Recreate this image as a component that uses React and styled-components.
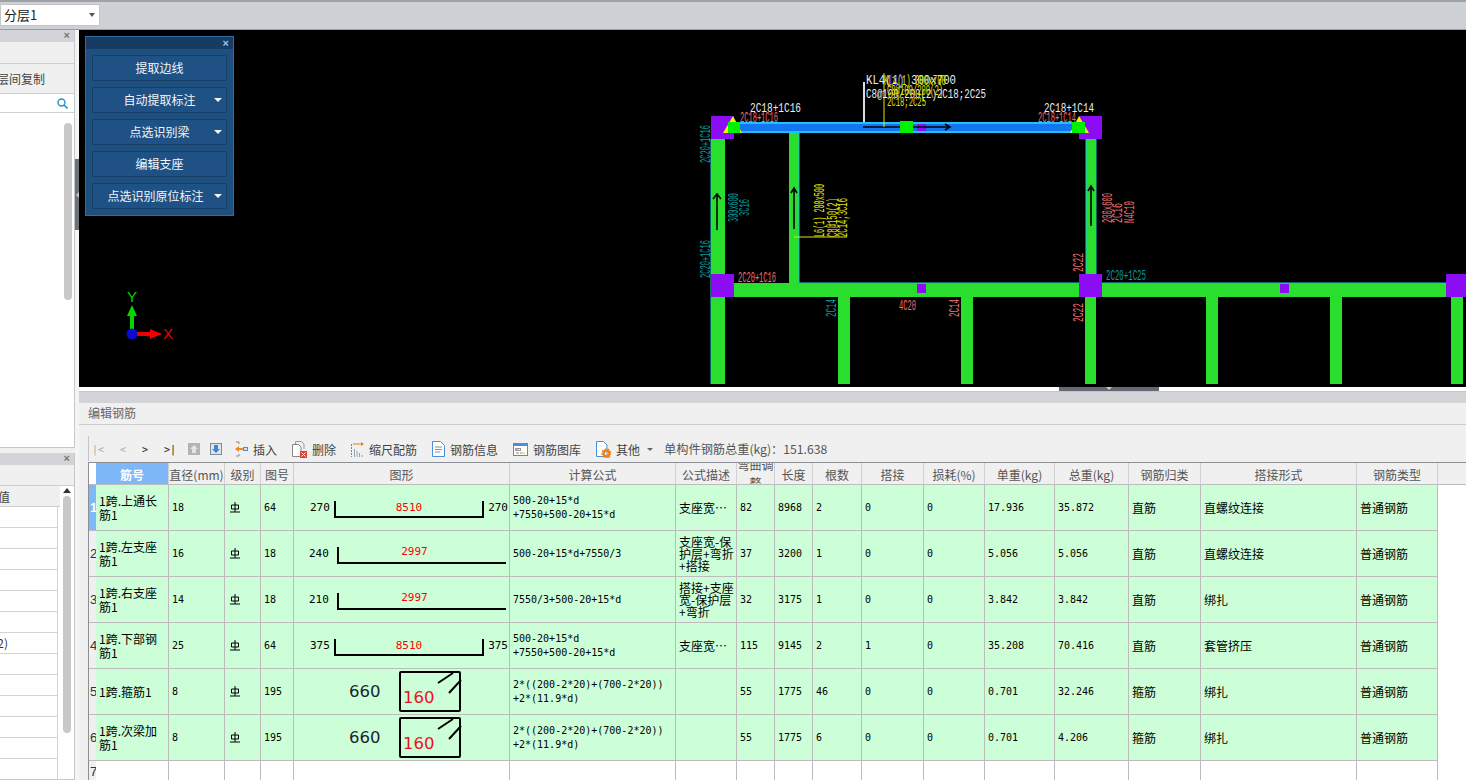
import React from 'react';
import styled, { createGlobalStyle } from 'styled-components';

const CJK = `"Noto Sans CJK SC", "Noto Sans", sans-serif`;
const MONO = `"DejaVu Sans Mono", "Noto Sans CJK SC", monospace`;

const Global = createGlobalStyle`
    html, body { margin: 0; padding: 0; background: #fff; overflow: hidden; }
    * { box-sizing: border-box; }
`;

const Page = styled.div`
    width: 1466px;
    height: 780px;
    display: flex;
    flex-direction: column;
    overflow: hidden;
    font-family: ${CJK};
    font-size: 12px;
`;

const TopBar = styled.div`
    height: 30px;
    flex: none;
    background: #cdd0d4;
    border-top: 2px solid #9fa2a6;
    border-bottom: 1px solid #9a9da1;
    padding-top: 2px;
`;

const LayerSelect = styled.div`
    width: 100px;
    height: 22px;
    background: #fff;
    border: 1px solid #c4c4c4;
    display: flex;
    align-items: center;
    justify-content: space-between;
    padding: 0 4px 2px 3px;
    font-size: 13px;
    color: #222;
    &::after {
        content: '';
        margin-top: 2px;
        border-left: 3px solid transparent;
        border-right: 3px solid transparent;
        border-top: 4px solid #555;
    }
`;

const Main = styled.div`
    flex: 1;
    display: flex;
    min-height: 0;
`;

const Sidebar = styled.div`
    width: 75px;
    flex: none;
    display: flex;
    flex-direction: column;
    gap: 5px;
    background: #f0f0f0;
`;

const Panel = styled.div`
    flex: ${p => p.$flex || 1};
    height: ${p => p.$height || 'auto'};
    background: #fff;
    border-right: 1px solid #c8c8c8;
    border-bottom: 1px solid #c8c8c8;
    display: flex;
    flex-direction: column;
    overflow: hidden;
    position: relative;
`;

const PanelHead = styled.div`
    height: 12px;
    flex: none;
    background: #d2d4d8;
    color: #777;
    font: bold 11px/11px "Liberation Sans", sans-serif;
    text-align: right;
    padding-right: 4px;
`;

const PanelRow = styled.div`
    height: ${p => p.$h}px;
    width: ${p => (p.$w ? `${p.$w}px` : 'auto')};
    flex: none;
    background: ${p => p.$bg || '#f0f0f0'};
    border-bottom: 1px solid #cfcfcf;
    display: flex;
    align-items: center;
    justify-content: flex-end;
    white-space: nowrap;
    color: #444;
    padding-right: ${p => p.$pr || 0}px;
`;

const Clip = styled.span`
    flex: none;
    margin-right: ${p => p.$mr || 0}px;
`;

const ListBody = styled.div`
    flex: 1;
    position: relative;
`;

const Scroll = styled.div`
    position: absolute;
    left: ${p => p.$left}px;
    top: ${p => p.$top}px;
    width: 8px;
    height: ${p => p.$h}px;
    background: #c8c8c8;
    border-radius: 4px;
`;

const PropLine = styled.div`
    width: 58px;
    height: 21px;
    border-bottom: 1px solid #d4d4d4;
    border-right: 1px solid #d4d4d4;
    display: flex;
    justify-content: flex-end;
    line-height: 20px;
    color: #333;
    white-space: nowrap;
    font-size: 12px;
    padding-right: 49px;
`;

const UpArrow = styled.div`
    position: absolute;
    left: 63px;
    top: 35px;
    border-left: 4px solid transparent;
    border-right: 4px solid transparent;
    border-bottom: 5px solid #333;
`;

const Splitter = styled.div`
    width: 4px;
    flex: none;
    background: #f4f4f4;
    padding-top: 129px;
`;

const Grip = styled.div`
    height: 71px;
    background: #6d7278;
    display: flex;
    align-items: center;
    color: #c8c8c8;
    &::before {
        content: '';
        margin-left: 1px;
        border-top: 3px solid transparent;
        border-bottom: 3px solid transparent;
        border-right: 3px solid #c8c8c8;
    }
`;

const Workspace = styled.div`
    flex: 1;
    min-width: 0;
    display: flex;
    flex-direction: column;
`;

const Canvas = styled.div`
    height: 357px;
    flex: none;
    background: #000;
    position: relative;
    overflow: hidden;
`;

const CadSvg = styled.svg`
    display: block;
    width: 100%;
    height: 100%;
`;

const CadLabel = styled.text`
    font-family: "Liberation Mono", monospace;
    font-size: ${p => p.$size || 15}px;
`;

const AxisLetter = styled.text`
    font-family: "Liberation Sans", sans-serif;
    font-size: 15px;
`;

const FloatPanel = styled.div`
    position: absolute;
    left: 6px;
    top: 6px;
    width: 149px;
    height: 180px;
    background: #1d4f7f;
    border: 1px solid #2f6ca6;
`;

const FloatHead = styled.div`
    height: 12px;
    background: #173b61;
    color: #9cc6e6;
    font: bold 11px/12px "Liberation Sans", sans-serif;
    text-align: right;
    padding-right: 4px;
`;

const FloatBody = styled.div`
    display: flex;
    flex-direction: column;
    gap: 6px;
    padding: 6px 6px 0;
`;

const FloatButton = styled.div`
    height: 26px;
    background: #1f5184;
    border: 1px solid #173e66;
    border-radius: 2px;
    color: #f2f6fa;
    display: flex;
    align-items: center;
    justify-content: center;
    font-size: 12px;
    position: relative;
    padding-right: ${p => p.$shift || 0}px;
    padding-bottom: 2px;
`;

const FloatCaret = styled.span`
    position: absolute;
    right: 4px;
    top: 10px;
    border-left: 4px solid transparent;
    border-right: 4px solid transparent;
    border-top: 4px solid #f2f6fa;
`;

const SashRow = styled.div`
    height: 4px;
    flex: none;
    background: #fff;
    display: flex;
    padding-left: 980px;
`;

const SashHandle = styled.div`
    width: 100px;
    height: 4px;
    background: #636a72;
    display: flex;
    justify-content: center;
    &::after {
        content: '';
        border-left: 3px solid transparent;
        border-right: 3px solid transparent;
        border-top: 3px solid #c8ccd0;
    }
`;

const EditorPanel = styled.div`
    flex: 1;
    min-height: 0;
    display: flex;
    flex-direction: column;
    background: #f0f0f0;
    border-top: 1px solid #c4c6ca;
`;

const EditorStrip = styled.div`
    height: 11px;
    flex: none;
    background: #d3d4d8;
`;

const EditorTitle = styled.div`
    height: 22px;
    flex: none;
    border-bottom: 1px solid #cccccc;
    padding-left: 9px;
    line-height: 19px;
    color: #666;
    font-size: 12px;
`;

const Toolbar = styled.div`
    height: 37px;
    flex: none;
    display: flex;
    align-items: center;
    margin-left: 9px;
    padding-top: 11px;
    position: relative;
    &::before {
        content: '';
        position: absolute;
        left: 0;
        top: 11px;
        bottom: 1px;
        width: 1px;
        background: #c4c4c4;
    }
`;

const NavItem = styled.span`
    width: ${p => p.$w}px;
    flex: none;
    text-align: center;
    font-family: ${MONO};
    font-size: 10px;
    color: ${p => (p.$off ? '#aaa' : '#222')};
`;

const ToolIcon = styled.svg`
    display: block;
    flex: none;
    margin-right: ${p => p.$mr || 0}px;
`;

const ToolGroup = styled.div`
    display: flex;
    align-items: center;
    gap: 15px;
    margin-left: 13px;
`;

const ToolButton = styled.div`
    display: flex;
    align-items: center;
    gap: 5px;
    color: #444;
    font-size: 12px;
    white-space: nowrap;
`;

const ToolCaret = styled.span`
    margin-left: 2px;
    border-left: 3px solid transparent;
    border-right: 3px solid transparent;
    border-top: 3px solid #666;
`;

const Total = styled.span`
    color: #555;
    font-size: 12.2px;
    white-space: nowrap;
    margin-left: -4px;
`;

const Table = styled.div`
    flex: 1;
    min-height: 0;
    margin-left: 9px;
    border-left: 1px solid #8b8e92;
    border-top: 1px solid #8b8e92;
    background: #fff;
    overflow: hidden;
`;

const Row = styled.div`
    display: grid;
    grid-template-columns: 7px 73px 56px 36px 33px 216px 166px 61px 38px 38px 49px 62px 61px 70px 74px 72px 156px 81px 1fr;
    height: ${p => p.$h}px;
    background: ${p => p.$bg || 'transparent'};
`;

const HeadCell = styled.div`
    background: ${p => (p.$active ? '#7eb8f8' : p.$corner ? '#fff' : '#f0f0f0')};
    color: ${p => (p.$active ? '#fff' : '#555')};
    font-weight: ${p => (p.$active ? 700 : 400)};
    border-right: ${p => (p.$bare ? 'none' : '1px solid #d0d0d0')};
    border-bottom: 1px solid #bcbcbc;
    display: flex;
    align-items: center;
    justify-content: center;
    text-align: center;
    white-space: ${p => (p.$wrap ? 'pre-line' : 'nowrap')};
    line-height: ${p => (p.$wrap ? '18px' : 'normal')};
    padding-top: 1px;
    overflow: hidden;
    font-size: 12px;
`;

const RowHead = styled.div`
    background: ${p => (p.$active ? '#7eb8f8' : '#f0f0f0')};
    color: ${p => (p.$active ? '#fff' : '#333')};
    font-weight: ${p => (p.$active ? 700 : 400)};
    border-bottom: 1px solid #bcbcbc;
    display: flex;
    align-items: center;
    font-family: "Liberation Sans", sans-serif;
    font-size: 13px;
    padding-left: 1px;
    overflow: hidden;
`;

const Cell = styled.div`
    background: ${p => (p.$empty ? '#fff' : '#ccffd7')};
    border-right: 1px solid #bcbcbc;
    border-bottom: 1px solid #bcbcbc;
    color: #000;
    display: flex;
    align-items: center;
    padding: ${p => p.$pad || '0 3px'};
    overflow: hidden;
    font-family: ${p => (p.$mono ? MONO : CJK)};
    font-size: ${p => (p.$mono ? '10px' : '12px')};
    line-height: ${p => p.$lh || 14}px;
    white-space: ${p => (p.$pre ? 'pre' : 'normal')};
`;

const Blank = styled.div`
    background: #fff;
`;

const ShapeWrap = styled.div`
    width: 100%;
    height: 100%;
    display: flex;
    align-items: center;
    padding-left: ${p => p.$pl}px;
    font-family: ${MONO};
    font-size: 11px;
    color: #000;
`;

const EndLabel = styled.span`
    flex: none;
    width: ${p => p.$w}px;
    text-align: ${p => p.$align};
`;

const Bar = styled.div`
    flex: none;
    width: ${p => p.$w}px;
    height: 17px;
    margin-top: 4px;
    margin-left: ${p => p.$ml}px;
    padding-right: ${p => (p.$closed ? 0 : 16)}px;
    border-bottom: 2px solid #000;
    border-left: 2px solid #000;
    border-right: ${p => (p.$closed ? '2px solid #000' : 'none')};
    color: #f00;
    text-align: center;
    line-height: ${p => (p.$closed ? 13 : 9)}px;
    font-size: 11px;
`;

const StirrupLen = styled.span`
    flex: none;
    width: 50px;
    font-family: "DejaVu Sans", sans-serif;
    font-size: 16.5px;
    color: #1c2430;
`;

const StirrupBox = styled.div`
    flex: none;
    width: 62px;
    height: 41px;
    border: 2px solid #000;
    border-radius: 2px;
    position: relative;
    color: #f01020;
    font-family: "DejaVu Sans", sans-serif;
    font-size: 16.5px;
    line-height: 19px;
    padding: 15px 0 0 2px;
`;

const StirrupHooks = styled.svg`
    position: absolute;
    left: 34px;
    top: -1px;
`;

const Grade = styled.svg`
    display: block;
    margin-left: 2px;
`;

// text, x, baseline y, drawn length, colour, font size
const labels = [
    ['2C18+1C16', 750, 112, 51, '#eee', 12],
    ['2C18+1C16', 740, 122, 38, '#f07070'],
    ['2C18+1C14', 1044, 112, 50, '#eee', 12],
    ['2C18+1C14', 1038, 122, 38, '#f07070'],
    ['KL4(1) 300x700', 866, 84, 90, '#eee', 13],
    ['C8@100/200(2)2C18;2C25', 866, 98, 120, '#eee', 12],
    ['KL4(1) 300x700', 884, 85, 62, '#e4e400', 14],
    ['(1)', 889, 85, 15, '#2030e0', 14],
    ['C8@100/200(2)', 887, 95, 56, '#e4e400', 14],
    ['2C18;2C25', 887, 106, 39, '#e4e400', 13],
    ['2C20+1C16', 738, 282, 38, '#f07070'],
    ['2C20+1C25', 1106, 280, 40, '#0a9a9a'],
    ['4C20', 899, 310, 17, '#f07070'],
];

// same fields, x is the baseline and the text runs upward from y
const vertLabels = [
    ['2C20+1C16', 710, 163, 38, '#0a9a9a'],
    ['2C20+1C16', 710, 278, 38, '#0a9a9a'],
    ['300x600', 738, 222, 29, '#0a9a9a'],
    ['3C16', 749, 216, 17, '#0a9a9a'],
    ['L6(1) 200x500', 824, 237, 53, '#e4e400', 14],
    ['C8@150(2)', 837, 237, 39, '#e4e400', 14],
    ['2C14;3C16', 847, 237, 39, '#e4e400', 14],
    ['200x600', 1112, 223, 30, '#f07070'],
    ['2C16', 1122, 223, 20, '#f07070', 14],
    ['N4C10', 1134, 223, 22, '#f07070', 14],
    ['2C22', 1083, 272, 19, '#f07070'],
    ['2C14', 836, 317, 18, '#0a9a9a', 14],
    ['2C14', 959, 317, 18, '#f07070', 14],
    ['2C22', 1083, 322, 19, '#f07070'],
];

const greenBlocks = [
    [711, 139, 14, 135], [789, 133, 10, 150], [1086, 139, 10, 135],
    [734, 283, 712, 14],
    [711, 297, 14, 87], [838, 297, 12, 87], [961, 297, 12, 87], [1085, 297, 11, 87],
    [1206, 297, 12, 87], [1330, 297, 12, 87], [1451, 297, 12, 87],
];

const purpleBlocks = [
    [711, 116, 23, 23], [1079, 116, 23, 23], [711, 274, 23, 23], [1079, 274, 23, 23],
    [1446, 274, 20, 23], [917, 284, 9, 9], [1280, 284, 9, 9], [917, 124, 9, 7],
];

const CadDrawing = () => (
    <CadSvg viewBox="79 30 1387 357">
        {greenBlocks.map(([x, y, w, h]) => <rect key={`${x}-${y}`} x={x} y={y} width={w} height={h} fill="#2ade2e" />)}
        <path d="M711 139V384M799 133V283H1079M1086 139V274M1096 139V274M1102 283H1446" stroke="#18c8d0" strokeWidth="1" fill="none" />
        <rect x="734" y="122" width="345" height="11" fill="#20c0ff" />
        <rect x="734" y="124" width="345" height="7" fill="#1475f0" />
        {purpleBlocks.map(([x, y, w, h]) => <rect key={`${x}-${y}`} x={x} y={y} width={w} height={h} fill="#8c0cf4" />)}

        <path d="M733 116L742 133H723Z" fill="#f4f400" />
        <rect x="728" y="122" width="12" height="11" fill="#00f000" />
        <path d="M1079 116L1089 133H1070Z" fill="#f4f400" />
        <rect x="1072" y="122" width="13" height="11" fill="#00f000" />

        <path d="M863 127H949M945 124L950 127L945 130" stroke="#000" strokeWidth="1.6" fill="none" />
        <rect x="900" y="121" width="13" height="12" fill="#00f000" />
        <path d="M864 82V122" stroke="#ddd" strokeWidth="2" />
        <path d="M884 73V127" stroke="#e4e400" strokeWidth="1" />
        <path d="M794 237H847" stroke="#e4e400" strokeWidth="1" />

        <path d="M717 230V194M713 199L717 194L721 199" stroke="#000" strokeWidth="1.6" fill="none" />
        <path d="M794 229V188M791 193L794 188L797 193" stroke="#000" strokeWidth="1.6" fill="none" />
        <path d="M1091 226V186M1088 191L1091 186L1094 191" stroke="#000" strokeWidth="1.6" fill="none" />

        {labels.map(([t, x, y, w, c, s]) => (
            <CadLabel key={`${t}-${x}-${y}`} x={x} y={y} fill={c} $size={s} textLength={w} lengthAdjust="spacingAndGlyphs">{t}</CadLabel>
        ))}
        {vertLabels.map(([t, x, y, w, c, s]) => (
            <CadLabel key={`${t}-${x}-${y}`} x={x} y={y} fill={c} $size={s} textLength={w} lengthAdjust="spacingAndGlyphs" transform={`rotate(-90 ${x} ${y})`}>{t}</CadLabel>
        ))}

        <rect x="130" y="315" width="4" height="16" fill="#00d800" />
        <path d="M132 305L137 316H127Z" fill="#00d800" />
        <rect x="136" y="332" width="15" height="4" fill="#f00000" />
        <path d="M162 334L150 329V339Z" fill="#f00000" />
        <circle cx="132" cy="334" r="5.5" fill="#0a0ad0" />
        <AxisLetter x="127" y="302" fill="#00d800">Y</AxisLetter>
        <AxisLetter x="163" y="339" fill="#f00000">X</AxisLetter>
    </CadSvg>
);

const floatButtons = [
    { text: '提取边线' },
    { text: '自动提取标注', menu: true },
    { text: '点选识别梁', menu: true },
    { text: '编辑支座' },
    { text: '点选识别原位标注', menu: true, shift: 8 },
];

const UpIcon = () => (
    <ToolIcon width="12" height="12" viewBox="0 0 12 12" $mr={10}>
        <rect width="12" height="12" fill="#b4b4b4" />
        <path d="M6 2L10 6H8V10H4V6H2Z" fill="#e4e4e4" />
    </ToolIcon>
);

const DownIcon = () => (
    <ToolIcon width="12" height="12" viewBox="0 0 12 12">
        <rect x="0.5" y="0.5" width="11" height="11" fill="#dfe6ee" stroke="#7d8a98" />
        <path d="M6 10L10 6H8V2H4V6H2Z" fill="#3c86d8" />
    </ToolIcon>
);

const InsertIcon = () => (
    <ToolIcon width="13" height="16" viewBox="0 0 13 16">
        <path d="M4 3V1H1M4 13V15H1" stroke="#888" fill="none" />
        <path d="M0 8L4 5V7H8V9H4V11Z" fill="#f08a1c" />
        <rect x="8.5" y="6.5" width="4" height="3" fill="#cfe2f6" stroke="#4a90d8" />
    </ToolIcon>
);

const DeleteIcon = () => (
    <ToolIcon width="15" height="17" viewBox="0 0 15 17">
        <path d="M3.5 3.5V0.5H9.5L12 3V8" stroke="#999" fill="none" />
        <path d="M0.5 3.5H6.5L9 6V15.5H0.5Z" stroke="#888" fill="#fff" />
        <rect x="8" y="10" width="7" height="7" fill="#d8433a" />
        <path d="M9.5 11.5L13.5 15.5M13.5 11.5L9.5 15.5" stroke="#fff" />
    </ToolIcon>
);

const ScaleIcon = () => (
    <ToolIcon width="13" height="15" viewBox="0 0 13 15">
        <path d="M0.5 2V15" stroke="#4a90d8" strokeDasharray="2 1" />
        <path d="M2 2H11" stroke="#ef7f1a" />
        <path d="M10 0L13 2L10 4Z" fill="#ef7f1a" />
        <path d="M3.5 7V15M6 9V15M8.5 11V15M11 13V15" stroke="#8aa4bc" />
    </ToolIcon>
);

const InfoIcon = () => (
    <ToolIcon width="13" height="16" viewBox="0 0 13 16">
        <path d="M0.5 0.5H8.5L12.5 4.5V15.5H0.5Z" fill="#fff" stroke="#4a8fd8" />
        <path d="M3 6H10M3 8.5H10M3 11H8" stroke="#8a8f96" />
    </ToolIcon>
);

const LibraryIcon = () => (
    <ToolIcon width="15" height="13" viewBox="0 0 15 13">
        <rect x="0.5" y="0.5" width="14" height="12" fill="#fff" stroke="#4a8fd8" />
        <rect x="0" y="0" width="15" height="3" fill="#4a8fd8" />
        <path d="M3 6H6M3 10H6" stroke="#888" />
        <path d="M7 10H9" stroke="#e06a50" />
        <path d="M9 10H12" stroke="#e8c040" />
        <rect x="2.5" y="5.5" width="5" height="2" fill="none" stroke="#999" />
    </ToolIcon>
);

const OtherIcon = () => (
    <ToolIcon width="15" height="17" viewBox="0 0 15 17">
        <path d="M0.5 0.5H7.5L11 4V15.5H0.5Z" fill="#fff" stroke="#4a8fd8" />
        <circle cx="10.5" cy="12.5" r="3" fill="none" stroke="#f07d1a" strokeWidth="2.4" />
        <circle cx="10.5" cy="12.5" r="4.6" fill="none" stroke="#f07d1a" strokeWidth="1.2" strokeDasharray="1.6 1.6" />
    </ToolIcon>
);

const GradeMark = () => (
    <Grade width="10" height="11" viewBox="0 0 10 11">
        <path d="M5 0V10M1.5 3H8.5V7H1.5ZM0 10H10" stroke="#000" fill="none" />
    </Grade>
);

const heads = [
    ['直径(mm)'], ['级别'], ['图号'], ['图形'], ['计算公式'], ['公式描述'], ['弯曲调\n整', true],
    ['长度'], ['根数'], ['搭接'], ['损耗(%)'], ['单重(kg)'], ['总重(kg)'], ['钢筋归类'], ['搭接形式'], ['钢筋类型'],
];

const longFormula = '500-20+15*d\n+7550+500-20+15*d';
const hoopFormula = '2*((200-2*20)+(700-2*20))\n+2*(11.9*d)';

const rows = [
    { name: '1跨.上通长筋1', dia: 18, fig: 64, shape: { kind: 'u', end: 270, len: 8510 }, formula: longFormula, desc: '支座宽…', bend: 82, length: 8968, count: 2, lap: 0, unit: '17.936', total: '35.872', cat: '直筋', lapType: '直螺纹连接' },
    { name: '1跨.左支座筋1', dia: 16, fig: 18, shape: { kind: 'l', end: 240, len: 2997 }, formula: '500-20+15*d+7550/3', desc: '支座宽-保\n护层+弯折\n+搭接', bend: 37, length: 3200, count: 1, lap: 0, unit: '5.056', total: '5.056', cat: '直筋', lapType: '直螺纹连接' },
    { name: '1跨.右支座筋1', dia: 14, fig: 18, shape: { kind: 'l', end: 210, len: 2997 }, formula: '7550/3+500-20+15*d', desc: '搭接+支座\n宽-保护层\n+弯折', bend: 32, length: 3175, count: 1, lap: 0, unit: '3.842', total: '3.842', cat: '直筋', lapType: '绑扎' },
    { name: '1跨.下部钢筋1', dia: 25, fig: 64, shape: { kind: 'u', end: 375, len: 8510 }, formula: longFormula, desc: '支座宽…', bend: 115, length: 9145, count: 2, lap: 1, unit: '35.208', total: '70.416', cat: '直筋', lapType: '套管挤压' },
    { name: '1跨.箍筋1', dia: 8, fig: 195, shape: { kind: 'hoop' }, formula: hoopFormula, desc: '', bend: 55, length: 1775, count: 46, lap: 0, unit: '0.701', total: '32.246', cat: '箍筋', lapType: '绑扎' },
    { name: '1跨.次梁加筋1', dia: 8, fig: 195, shape: { kind: 'hoop' }, formula: hoopFormula, desc: '', bend: 55, length: 1775, count: 6, lap: 0, unit: '0.701', total: '4.206', cat: '箍筋', lapType: '绑扎' },
];

const Shape = ({ shape }) => {
    if (shape.kind === 'hoop') {
        return (
            <ShapeWrap $pl={55}>
                <StirrupLen>660</StirrupLen>
                <StirrupBox>
                    160
                    <StirrupHooks width="28" height="24" viewBox="0 0 28 24">
                        <path d="M3 11L18 1M14 21L26 8" stroke="#000" strokeWidth="2" fill="none" />
                    </StirrupHooks>
                </StirrupBox>
            </ShapeWrap>
        );
    }
    if (shape.kind === 'u') {
        return (
            <ShapeWrap $pl={16}>
                <EndLabel $w={20} $align="left">{shape.end}</EndLabel>
                <Bar $w={150} $ml={4} $closed>{shape.len}</Bar>
                <EndLabel $w={24} $align="right">{shape.end}</EndLabel>
            </ShapeWrap>
        );
    }
    return (
        <ShapeWrap $pl={15}>
            <EndLabel $w={20} $align="left">{shape.end}</EndLabel>
            <Bar $w={169} $ml={8}>{shape.len}</Bar>
        </ShapeWrap>
    );
};

const App = () => (
    <Page>
        <Global />
        <TopBar>
            <LayerSelect>分层1</LayerSelect>
        </TopBar>
        <Main>
            <Sidebar>
                <Panel $flex="none" $height="418px">
                    <PanelHead>×</PanelHead>
                    <PanelRow $h={22} />
                    <PanelRow $h={30}>
                        <Clip $mr={29}>层间复制</Clip>
                    </PanelRow>
                    <PanelRow $h={19} $bg="#fff" $pr={6}>
                        <svg width="11" height="11" viewBox="0 0 11 11">
                            <circle cx="4.5" cy="4.5" r="3.5" fill="none" stroke="#2f8fc4" strokeWidth="1.4" />
                            <path d="M7 7L10.5 10.5" stroke="#2f8fc4" strokeWidth="1.6" />
                        </svg>
                    </PanelRow>
                    <ListBody>
                        <Scroll $left={64} $top={10} $h={177} />
                    </ListBody>
                </Panel>
                <Panel>
                    <PanelHead>×</PanelHead>
                    <PanelRow $h={21} />
                    <PanelRow $h={21} $w={60}>
                        <Clip $mr={50}>属性值</Clip>
                    </PanelRow>
                    <ListBody>
                        {Array.from({ length: 13 }, (_, i) => (
                            <PropLine key={i}>{i === 6 ? <Clip>(2)</Clip> : ''}</PropLine>
                        ))}
                    </ListBody>
                    <UpArrow />
                    <Scroll $left={63} $top={43} $h={237} />
                </Panel>
            </Sidebar>
            <Splitter>
                <Grip />
            </Splitter>
            <Workspace>
                <Canvas>
                    <CadDrawing />
                    <FloatPanel>
                        <FloatHead>×</FloatHead>
                        <FloatBody>
                            {floatButtons.map(b => (
                                <FloatButton key={b.text} $shift={b.shift}>
                                    {b.text}
                                    {b.menu && <FloatCaret />}
                                </FloatButton>
                            ))}
                        </FloatBody>
                    </FloatPanel>
                </Canvas>
                <SashRow>
                    <SashHandle />
                </SashRow>
                <EditorPanel>
                    <EditorStrip />
                    <EditorTitle>编辑钢筋</EditorTitle>
                    <Toolbar>
                        <NavItem $w={20} $off>|&lt;</NavItem>
                        <NavItem $w={30} $off>&lt;</NavItem>
                        <NavItem $w={14}>&gt;</NavItem>
                        <NavItem $w={36}>&gt;|</NavItem>
                        <UpIcon />
                        <DownIcon />
                        <ToolGroup>
                            <ToolButton><InsertIcon />插入</ToolButton>
                            <ToolButton><DeleteIcon />删除</ToolButton>
                            <ToolButton><ScaleIcon />缩尺配筋</ToolButton>
                            <ToolButton><InfoIcon />钢筋信息</ToolButton>
                            <ToolButton><LibraryIcon />钢筋图库</ToolButton>
                            <ToolButton><OtherIcon />其他<ToolCaret /></ToolButton>
                            <Total>单构件钢筋总重(kg)：151.638</Total>
                        </ToolGroup>
                    </Toolbar>
                    <Table>
                        <Row $h={22}>
                            <HeadCell $corner $bare />
                            <HeadCell $active>筋号</HeadCell>
                            {heads.map(([t, wrap]) => <HeadCell key={t} $wrap={wrap}>{t}</HeadCell>)}
                            <HeadCell $bare />
                        </Row>
                        {rows.map((r, i) => (
                            <Row $h={46} key={r.name}>
                                <RowHead $active={i === 0}>{i + 1}</RowHead>
                                <Cell $pad="0 6px 0 3px">{r.name}</Cell>
                                <Cell $mono>{r.dia}</Cell>
                                <Cell><GradeMark /></Cell>
                                <Cell $mono>{r.fig}</Cell>
                                <Cell $pad="0"><Shape shape={r.shape} /></Cell>
                                <Cell $mono $pre>{r.formula}</Cell>
                                <Cell $pre $lh={12} $pad="0 0 0 3px">{r.desc}</Cell>
                                <Cell $mono>{r.bend}</Cell>
                                <Cell $mono>{r.length}</Cell>
                                <Cell $mono>{r.count}</Cell>
                                <Cell $mono>{r.lap}</Cell>
                                <Cell $mono>0</Cell>
                                <Cell $mono>{r.unit}</Cell>
                                <Cell $mono>{r.total}</Cell>
                                <Cell>{r.cat}</Cell>
                                <Cell>{r.lapType}</Cell>
                                <Cell>普通钢筋</Cell>
                                <Blank />
                            </Row>
                        ))}
                        <Row $h={22}>
                            <RowHead>7</RowHead>
                            {Array.from({ length: 17 }, (_, i) => <Cell key={i} $empty />)}
                            <Blank />
                        </Row>
                    </Table>
                </EditorPanel>
            </Workspace>
        </Main>
    </Page>
);

export default App;
